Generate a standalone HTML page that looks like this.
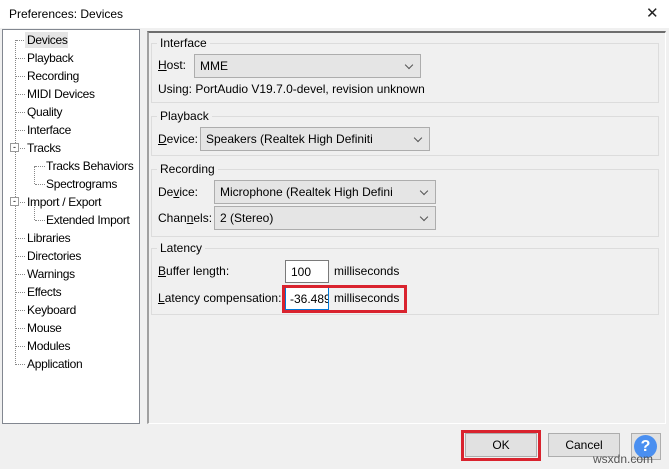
<!DOCTYPE html><html><head><style>
*{box-sizing:border-box}
body{margin:0;width:669px;height:469px;background:#f0f0f0;font-family:"Liberation Sans",sans-serif;font-size:12px;color:#000;position:relative;overflow:hidden}
.a{position:absolute;white-space:nowrap}
.tree{position:absolute;left:2px;top:29px;width:138px;height:395px;background:#fff;border:1px solid #828790}
.grp{position:absolute;left:151px;width:508px;border:1px solid #dcdcdc}
.gt{position:absolute;background:#f0f0f0;padding:0 3px}
.sel{position:absolute;background:#e5e5e5;border:1px solid #adadad;height:24px;padding:4px 5px}
.sel:after{content:"";position:absolute;right:8px;top:7px;width:5px;height:5px;border-right:1px solid #555;border-bottom:1px solid #555;transform:rotate(45deg)}
.inp{position:absolute;background:#fff;border:1px solid #7a7a7a;height:23px;padding:4px 5px;overflow:hidden}
.btn{position:absolute;background:#e1e1e1;border:1px solid #adadad;height:24px;text-align:center;padding-top:4px}
.dot{position:absolute;border-top:1px dotted #888;width:8px}
.ti{letter-spacing:-0.3px}
u{text-decoration:underline}
</style></head><body>
<div class="a" style="left:0;top:0;width:669px;height:28px;background:#fff"></div>
<div class="a" style="left:9px;top:7px">Preferences: Devices</div>
<div class="a" style="left:646px;top:4px;font-size:15px;color:#222">✕</div>
<div class="tree"></div>
<div class="a" style="left:15px;top:40px;height:325px;border-left:1px dotted #888"></div>
<div class="a" style="left:34px;top:166px;height:18px;border-left:1px dotted #888"></div>
<div class="a" style="left:34px;top:202px;height:18px;border-left:1px dotted #888"></div>
<div class="a" style="left:25px;top:32px;width:43px;height:16px;background:#e5e5e5"></div>
<div class="a ti" style="left:27px;top:33px;line-height:14px">Devices</div>
<div id="t"></div>
<div class="a" style="left:10px;top:143px;width:9px;height:9px;border:1px solid #999;background:#fff;font-size:9px;line-height:6px;text-align:center">-</div>
<div class="a" style="left:10px;top:197px;width:9px;height:9px;border:1px solid #999;background:#fff;font-size:9px;line-height:6px;text-align:center">-</div>
<div class="a" style="left:147px;top:31px;width:519px;height:393px;border-top:2px solid #6d6d6d;border-left:2px solid #a0a0a0;border-right:1px solid #fff;border-bottom:1px solid #fff"></div>

<div class="grp" style="top:43px;height:60px"></div><div class="gt a" style="left:157px;top:36px">Interface</div>
<div class="a" style="left:158px;top:58px"><u>H</u>ost:</div>
<div class="sel" style="left:194px;top:54px;width:227px">MME</div>
<div class="a" style="left:158px;top:82px">Using: PortAudio V19.7.0-devel, revision unknown</div>

<div class="grp" style="top:116px;height:40px"></div><div class="gt a" style="left:157px;top:109px">Playback</div>
<div class="a" style="left:158px;top:132px"><u>D</u>evice:</div>
<div class="sel" style="left:200px;top:127px;width:230px">Speakers (Realtek High Definiti</div>

<div class="grp" style="top:169px;height:68px"></div><div class="gt a" style="left:157px;top:162px">Recording</div>
<div class="a" style="left:158px;top:185px">De<u>v</u>ice:</div>
<div class="sel" style="left:214px;top:180px;width:222px">Microphone (Realtek High Defini</div>
<div class="a" style="left:158px;top:211px">Chan<u>n</u>els:</div>
<div class="sel" style="left:214px;top:206px;width:222px">2 (Stereo)</div>

<div class="grp" style="top:248px;height:67px"></div><div class="gt a" style="left:157px;top:241px">Latency</div>
<div class="a" style="left:158px;top:264px"><u>B</u>uffer length:</div>
<div class="inp" style="left:285px;top:260px;width:44px">100</div>
<div class="a" style="left:334px;top:264px">milliseconds</div>
<div class="a" style="left:158px;top:291px"><u>L</u>atency compensation:</div>
<div class="inp" style="left:285px;top:287px;width:44px;border-color:#0078d7;padding-left:4px">-36.489</div>
<div class="a" style="left:334px;top:291px">milliseconds</div>
<div class="a" style="left:282px;top:285px;width:125px;height:28px;border:3px solid #d9232e"></div>

<div class="btn" style="left:465px;top:433px;width:72px">OK</div>
<div class="a" style="left:461px;top:430px;width:80px;height:31px;border:3px solid #d9232e"></div>
<div class="btn" style="left:548px;top:433px;width:72px">Cancel</div>
<div class="btn" style="left:631px;top:433px;width:30px;height:27px;padding:1px 0 0 2px"><div style="width:23px;height:23px;border-radius:50%;background:#4a8ff0;color:#fff;font-weight:bold;font-size:16px;line-height:23px">?</div></div>
<div class="a" style="left:593px;top:452px;color:#555;font-size:12px">wsxdn.com</div>
<script>
var it=[["Playback",0],["Recording",0],["MIDI Devices",0],["Quality",0],["Interface",0],["Tracks",0],["Tracks Behaviors",1],["Spectrograms",1],["Import / Export",0],["Extended Import",1],["Libraries",0],["Directories",0],["Warnings",0],["Effects",0],["Keyboard",0],["Mouse",0],["Modules",0],["Application",0]];
var h="";it.forEach(function(e,i){var y=51+i*18,x=e[1]?46:27;
h+='<div class="a ti" style="left:'+x+'px;top:'+y+'px">'+e[0]+'</div><div class="dot" style="left:'+(x-11)+'px;top:'+(y+7)+'px;width:'+(e[1]?10:9)+'px"></div>';});
h+='<div class="dot" style="left:16px;top:40px"></div>';
document.getElementById("t").innerHTML=h;
</script>
</body></html>
